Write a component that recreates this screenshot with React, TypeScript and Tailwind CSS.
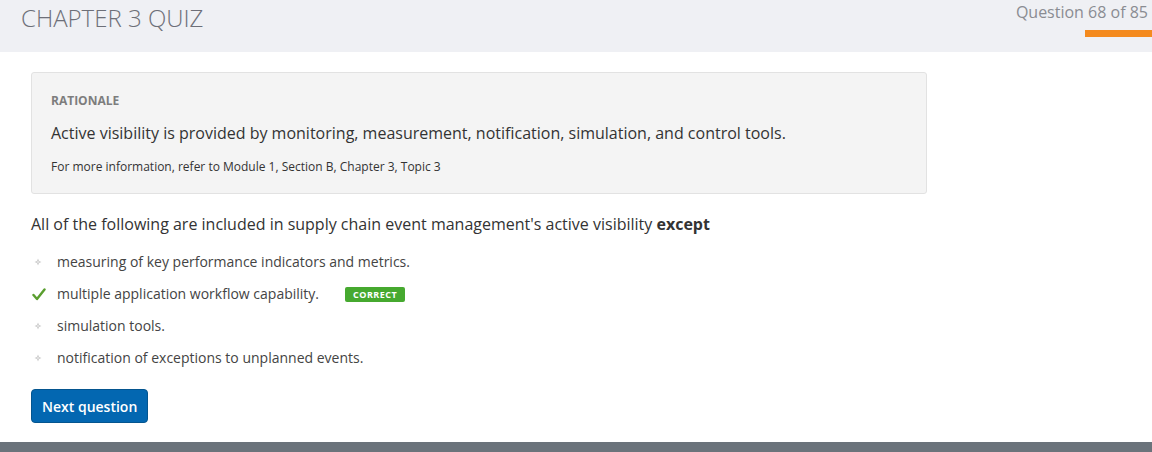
import React from "react";

const options = [
  { text: "measuring of key performance indicators and metrics.", correct: false },
  { text: "multiple application workflow capability.", correct: true },
  { text: "simulation tools.", correct: false },
  { text: "notification of exceptions to unplanned events.", correct: false },
];

function Diamond() {
  return (
    <svg width="8" height="8" viewBox="0 0 8 8" className="block">
      <path d="M4 0.5 L5 3 L7.5 4 L5 5 L4 7.5 L3 5 L0.5 4 L3 3 Z" fill="#c8c8c8" />
      <circle cx="4" cy="4" r="1" fill="#e8e8e8" />
    </svg>
  );
}

function Check() {
  return (
    <svg width="14" height="13" viewBox="0 0 14 13" className="block">
      <path d="M1.5 7 L5 11 L12.5 1.5" fill="none" stroke="#5a9e2f" strokeWidth="2.4" strokeLinecap="round" strokeLinejoin="round" />
    </svg>
  );
}

export default function App() {
  return (
    <div className="w-[1152px] h-[452px] bg-white flex flex-col overflow-hidden" style={{ fontFamily: '"Open Sans", sans-serif' }}>
      <div className="h-[52px] bg-[#eff0f4] flex justify-between shrink-0">
        <div className="pl-[21px] pt-[3px] text-[24px] leading-[30px] font-light text-[#6d6f78]">CHAPTER 3 QUIZ</div>
        <div className="flex flex-col items-end">
          <div className="pt-[1px] pr-[4px] text-[16px] leading-[22px] text-[#8a8c92]">Question 68 of 85</div>
          <div className="mt-[7px] w-[67px] h-[7px] bg-[#f48a1e]" />
        </div>
      </div>
      <div className="flex-1 pl-[31px] pt-[20px]">
        <div className="w-[896px] h-[122px] bg-[#f4f4f4] border border-[#e2e2e2] rounded-[3px] px-[19px] pt-[19px]">
          <div className="text-[12px] leading-[18px] font-bold text-[#7d7d7d]">RATIONALE</div>
          <div className="mt-[12px] text-[16px] leading-[22px] text-[#333]">
            Active visibility is provided by monitoring, measurement, notification, simulation, and control tools.
          </div>
          <div className="mt-[14px] text-[12px] leading-[18px] text-[#333]">
            For more information, refer to Module 1, Section B, Chapter 3, Topic 3
          </div>
        </div>
        <div className="mt-[19px] text-[16px] leading-[22px] text-[#333]">
          All of the following are included in supply chain event management's active visibility <b className="font-bold">except</b>
        </div>
        <div className="mt-[11px] flex flex-col">
          {options.map((o, i) => (
            <div key={i} className="h-[32px] flex items-center">
              <div className="w-[26px] flex justify-start pl-[1px]">
                {o.correct ? <Check /> : <div className="pl-[2px]"><Diamond /></div>}
              </div>
              <div className="text-[14px] leading-[20px] text-[#444]">{o.text}</div>
              {o.correct && (
                <div className="ml-[26px] bg-[#46a92f] text-white text-[9px] font-bold leading-[15px] px-[8px] rounded-[2px] tracking-[0.5px]">
                  CORRECT
                </div>
              )}
            </div>
          ))}
        </div>
        <div className="mt-[15px]">
          <button className="h-[34px] px-[10px] bg-[#0367b1] border border-[#04558f] rounded-[4px] text-white text-[14px] font-semibold">
            Next question
          </button>
        </div>
      </div>
      <div className="h-[10px] bg-[#6b737b] shrink-0" />
    </div>
  );
}
